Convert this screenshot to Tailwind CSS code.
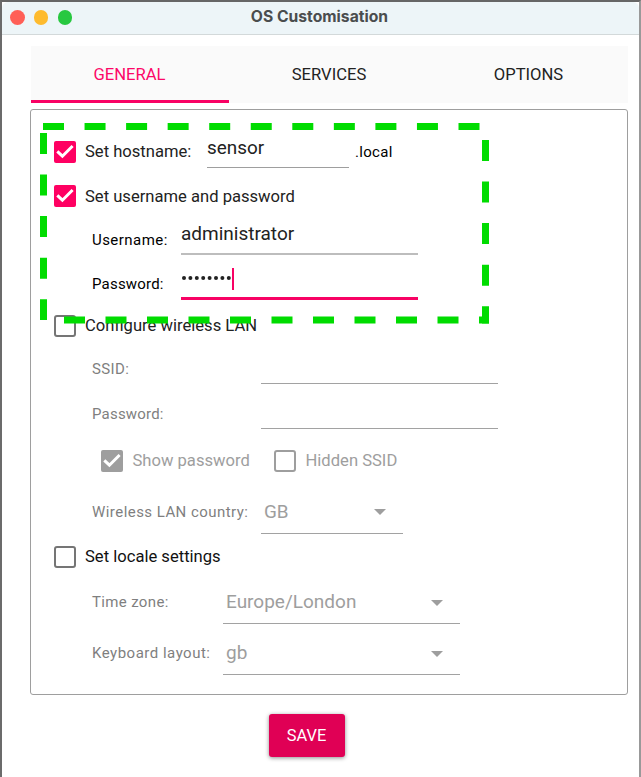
<!DOCTYPE html>
<html lang="en">
<head>
<meta charset="utf-8">
<title>OS Customisation</title>
<script src="https://cdn.jsdelivr.net/npm/@tailwindcss/browser@4"></script>
</head>
<body class="bg-white">
<div class="relative flex h-[777px] w-[641px] flex-col overflow-hidden border-t-2 border-r-2 border-l-2 border-t-[#666] border-r-[#999] border-l-[#6b6b6b] bg-white font-['Roboto',sans-serif] text-[16.6px] text-[#222]">
  <header class="relative flex h-[33px] shrink-0 items-center rounded-t-md border-b border-[#d3d9da] bg-[#edf5f8] pl-2">
    <div class="-mt-px flex gap-[9.3px]">
      <span class="size-[14.5px] rounded-full bg-[#ff5f57]"></span>
      <span class="size-[14.5px] rounded-full bg-[#febb2e]"></span>
      <span class="size-[14.5px] rounded-full bg-[#28c840]"></span>
    </div>
    <h1 class="absolute inset-x-0 top-0 pr-[2px] text-center font-['Inter',sans-serif] text-[15.7px] leading-[30px] font-bold text-[#4a4d4e]">OS Customisation</h1>
  </header>

  <main class="flex flex-col pt-[11px] pr-[11px] pl-[29px]">
    <nav class="grid h-[57px] w-[597px] grid-cols-3 bg-[#fafafa] text-center leading-[57px]">
      <div class="mr-px h-[57px] border-b-[3px] border-[#f80264] pr-px text-[#fd0768]">GENERAL</div>
      <div class="pr-px">SERVICES</div>
      <div>OPTIONS</div>
    </nav>

    <section class="mt-[6px] -ml-px flex h-[586px] w-[598px] flex-col rounded-[3px] border border-[#9e9e9e] pt-[19px] pl-[23px]">
      <div class="flex h-[45px] items-center">
        <svg class="mr-[9px] size-[22px]" viewBox="0 0 22 22"><rect width="22" height="22" rx="2" fill="#ff0062"/><path d="M3.3 10.3 8.4 15.2 18.6 5" fill="none" stroke="#fff" stroke-width="3"/></svg>
        <span class="w-[122px] pt-[2px]">Set hostname:</span>
        <span class="mb-[7px] h-[39px] w-[142px] border-b border-[#9e9e9e] text-[18.9px] leading-[38px]">sensor</span>
        <span class="ml-[6px] pt-[2px] text-[15px] tracking-[0.3px] text-black">.local</span>
      </div>
      <div class="flex h-[44px] items-center">
        <svg class="mr-[9px] size-[22px]" viewBox="0 0 22 22"><rect width="22" height="22" rx="2" fill="#ff0062"/><path d="M3.3 10.3 8.4 15.2 18.6 5" fill="none" stroke="#fff" stroke-width="3"/></svg>
        <span class="pt-[2px]">Set username and password</span>
      </div>
      <div class="flex h-[44px] pl-[38px]">
        <span class="w-[89px] text-[15px] leading-[44px] tracking-[0.45px] text-black">Username:</span>
        <span class="h-[37px] w-[237px] border-b-2 border-[#bdbdbd] text-[19px] leading-[32px]">administrator</span>
      </div>
      <div class="flex h-[44px] pl-[38px]">
        <span class="w-[89px] text-[15px] leading-[45px] tracking-[0.2px] text-black">Password:</span>
        <span class="flex h-[38px] w-[237px] border-b-[3px] border-[#f80264]">
          <svg class="h-[30px] w-[55px]" viewBox="0 0 55 30" aria-label="Eight hidden characters"><g fill="#222"><circle cx="3" cy="16" r="2"/><circle cx="9.4" cy="16" r="2"/><circle cx="15.8" cy="16" r="2"/><circle cx="22.2" cy="16" r="2"/><circle cx="28.6" cy="16" r="2"/><circle cx="35" cy="16" r="2"/><circle cx="41.4" cy="16" r="2"/><circle cx="47.8" cy="16" r="2"/></g><path d="M52 6v22" stroke="#f80264" stroke-width="2"/></svg>
        </span>
      </div>
      <div class="flex h-[40px] items-center">
        <span class="mr-[9px] size-[22px] rounded-[3px] border-[2.5px] border-[#757575]"></span>
        <span>Configure wireless LAN</span>
      </div>
      <div class="flex h-[45px] pl-[38px]">
        <span class="w-[169px] text-[15px] leading-[46px] tracking-[0.4px] text-[#7f7f7f]">SSID:</span>
        <span class="h-[38px] w-[237px] border-b border-[#a2a2a2]"></span>
      </div>
      <div class="flex h-[45px] pl-[38px]">
        <span class="w-[169px] text-[15px] leading-[46px] tracking-[0.2px] text-[#7f7f7f]">Password:</span>
        <span class="h-[38px] w-[237px] border-b border-[#a2a2a2]"></span>
      </div>
      <div class="flex h-[49px] items-center pl-[47px] text-[#9e9e9e]">
        <svg class="mr-[9.5px] size-[22px]" viewBox="0 0 22 22"><rect width="22" height="22" rx="2" fill="#9e9e9e"/><path d="M3.3 10.3 8.4 15.2 18.6 5" fill="none" stroke="#fff" stroke-width="3"/></svg>
        <span class="w-[141.5px] pt-[2px]">Show password</span>
        <span class="mr-[9.5px] size-[22px] rounded-[3px] border-2 border-[#9e9e9e]"></span>
        <span class="pt-[2px]">Hidden SSID</span>
      </div>
      <div class="flex h-[49px] pl-[38px]">
        <span class="w-[169px] text-[15px] leading-[54px] tracking-[0.45px] text-[#7f7f7f]">Wireless LAN country:</span>
        <span class="flex h-[49px] w-[142px] items-center justify-between border-b border-[#a2a2a2] pt-[6px] pr-[17px] pl-[3px] text-[18.9px] text-[#9e9e9e]">GB<svg class="h-[6px] w-[12px]" viewBox="0 0 12 6"><path d="M0 0h12L6 6z" fill="#9e9e9e"/></svg></span>
      </div>
      <div class="flex h-[45px] items-center">
        <span class="mr-[9px] size-[22px] rounded-[3px] border-[2.5px] border-[#757575]"></span>
        <span class="pt-[2px] text-[#111]">Set locale settings</span>
      </div>
      <div class="flex h-[51px] pl-[38px]">
        <span class="w-[131px] text-[15px] leading-[47px] tracking-[0.35px] text-[#7f7f7f]">Time zone:</span>
        <span class="flex h-[45px] w-[237px] items-center justify-between border-b border-[#a2a2a2] pt-[3px] pr-[17px] pl-[3px] text-[19px] text-[#9e9e9e]">Europe/London<svg class="h-[6px] w-[12px]" viewBox="0 0 12 6"><path d="M0 0h12L6 6z" fill="#9e9e9e"/></svg></span>
      </div>
      <div class="flex h-[51px] pl-[38px]">
        <span class="w-[131px] text-[15px] leading-[47px] tracking-[0.5px] text-[#7f7f7f]">Keyboard layout:</span>
        <span class="flex h-[45px] w-[237px] items-center justify-between border-b border-[#a2a2a2] pt-[3px] pr-[17px] pl-[3px] text-[19px] text-[#9e9e9e]">gb<svg class="h-[6px] w-[12px]" viewBox="0 0 12 6"><path d="M0 0h12L6 6z" fill="#9e9e9e"/></svg></span>
      </div>
    </section>

    <button class="mt-[19px] ml-[237.5px] h-[43px] w-[76px] rounded-[3px] bg-[#e00055] text-[16.4px] leading-[43px] text-white shadow-[0_1px_4px_rgba(0,0,0,0.45)]">SAVE</button>
  </main>

  <!-- Dashed highlight around the credentials fields -->
  <svg class="pointer-events-none absolute -top-[2px] -left-[2px] h-[777px] w-[641px]" viewBox="0 0 641 777" fill="none" stroke="#00dc00" stroke-width="7">
    <path d="M43 126.5H479.5" stroke-dasharray="21 20.55"/>
    <path d="M43.5 133V320" stroke-dasharray="21 20.55"/>
    <path d="M485.5 140V323.5" stroke-dasharray="21 20.55"/>
    <path d="M64 320H489" stroke-dasharray="21 20.5"/>
  </svg>
</div>
</body>
</html>
